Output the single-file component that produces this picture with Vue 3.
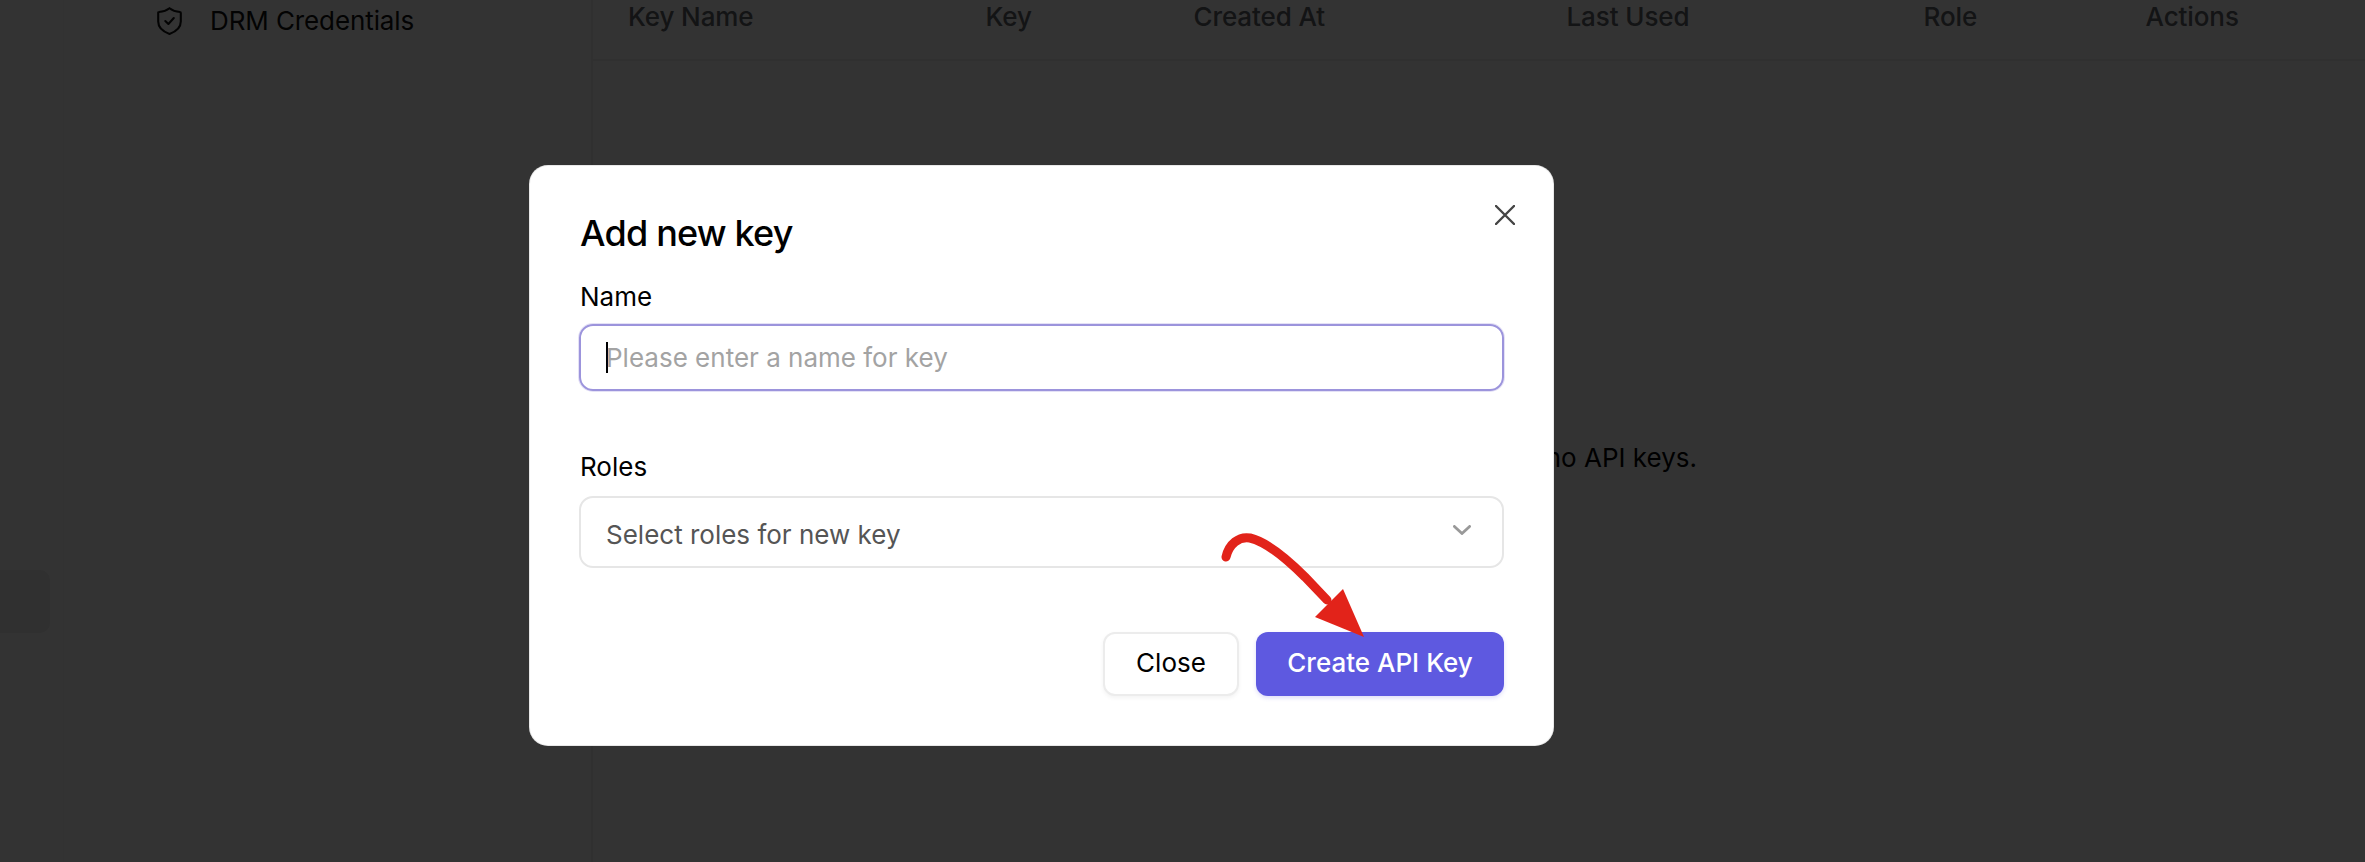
<script setup>
const columns = [
  { label: 'Key Name', width: '357.5px' },
  { label: 'Key', width: '208px' },
  { label: 'Created At', width: '373px' },
  { label: 'Last Used', width: '357px' },
  { label: 'Role', width: '222px' },
  { label: 'Actions', width: '1fr' },
]
const gridTemplate = columns.map((c) => c.width).join(' ')
</script>

<template>
  <div class="page">
    <aside class="sidebar">
      <div class="rail"><div class="rail-item"></div></div>
      <nav class="nav">
        <div class="nav-item">
          <svg class="shield" viewBox="0 0 25 28" fill="none" stroke="currentColor" stroke-width="2.1" stroke-linejoin="round" stroke-linecap="round">
            <path d="M12.5 1.2 C15 3.2 19 4.6 23 5 C23.6 5 23.8 5.3 23.8 5.9 V14.5 C23.8 20.5 18.5 24.8 12.5 26.9 C6.5 24.8 1.2 20.5 1.2 14.5 V5.9 C1.2 5.3 1.4 5 2 5 C6 4.6 10 3.2 12.5 1.2 Z" />
            <path d="M8.3 14 L11.4 17 L16.8 11" />
          </svg>
          <span>DRM Credentials</span>
        </div>
      </nav>
    </aside>
    <main class="main">
      <div class="thead" :style="{ gridTemplateColumns: gridTemplate }">
        <div v-for="c in columns" :key="c.label" class="th">{{ c.label }}</div>
      </div>
      <div class="empty">You have no API keys.</div>
    </main>

    <div class="overlay">
      <section class="modal">
        <button class="close-x" aria-label="Close">
          <svg viewBox="0 0 20 20" width="20" height="20" fill="none" stroke="currentColor" stroke-width="2.4" stroke-linecap="round">
            <path d="M1 1 L19 19 M19 1 L1 19" />
          </svg>
        </button>
        <h2 class="title">Add new key</h2>
        <label class="label label-name">Name</label>
        <div class="field field-focus">
          <span class="caret"></span>
          <span class="placeholder">Please enter a name for key</span>
        </div>
        <label class="label label-roles">Roles</label>
        <div class="field field-select">
          <span class="select-text">Select roles for new key</span>
          <svg class="chevron" viewBox="0 0 18 10" width="18" height="10" fill="none" stroke="currentColor" stroke-width="2.8" stroke-linecap="round" stroke-linejoin="round">
            <path d="M1.4 1.4 L9 8.6 L16.6 1.4" />
          </svg>
        </div>
        <div class="actions">
          <button class="btn btn-close">Close</button>
          <button class="btn btn-create">Create API Key</button>
        </div>
        <svg class="arrow" viewBox="0 0 160 115" width="160" height="115">
          <path d="M11 27 C14 14 24 6 35 8 C52 12 74 31 90 47 L112 70" fill="none" stroke="#e2231a" stroke-width="9" stroke-linecap="round" />
          <path d="M128 59 L149 107 L100 87 Z" fill="#e2231a" />
        </svg>
      </section>
    </div>
  </div>
</template>

<style>
html, body { margin: 0; padding: 0; background: #fff; overflow: hidden; }
</style>

<style scoped>
.page {
  position: relative;
  display: flex;
  width: 2365px;
  height: 862px;
  overflow: hidden;
  background: #fff;
  font-family: Inter, "Liberation Sans", sans-serif;
  color: #000;
}
.sidebar {
  width: 593px;
  flex: none;
  display: flex;
  box-sizing: border-box;
  border-right: 2px solid #f0f0f0;
}
.rail {
  width: 64px;
  flex: none;
  box-sizing: border-box;
  padding-top: 570px;
  border-right: 1px solid #fafafa;
}
.rail-item {
  width: 50px;
  height: 63px;
  background: #eeeeee;
  border-radius: 0 10px 10px 0;
}
.nav { flex: 1; padding-left: 93px; }
.nav-item {
  display: flex;
  align-items: center;
  gap: 28px;
  height: 40px;
  font-size: 26px;
  letter-spacing: -0.1px;
  color: #111;
}
.shield { width: 25px; height: 28px; margin-top: 2px; flex: none; }
.main { flex: 1; display: flex; flex-direction: column; min-width: 0; }
.thead {
  display: grid;
  padding-left: 35px;
  height: 59px;
  border-bottom: 2px solid #f0f0f0;
  box-sizing: content-box;
}
.th { font-size: 26px; font-weight: 500; line-height: 34px; color: #5f6368; letter-spacing: -0.1px; }
.empty {
  display: flex;
  justify-content: flex-end;
  padding: 380px 668px 0 0;
  font-size: 26px;
  line-height: 34px;
  color: #000;
}
.overlay {
  position: absolute;
  inset: 0;
  box-sizing: border-box;
  padding: 166px 0 0 530px;
  background: rgba(0, 0, 0, 0.8);
}
.modal {
  position: relative;
  width: 1023px;
  height: 579px;
  box-sizing: border-box;
  padding: 0 49px 0 49px;
  background: #fff;
  border-radius: 18px;
  box-shadow: 0 0 0 1px #e8e8e8;
  display: flex;
  flex-direction: column;
}
.close-x {
  position: absolute;
  top: 39px;
  right: 38px;
  padding: 0;
  border: 0;
  background: none;
  color: #444;
  display: flex;
}
.title {
  margin: 45px 0 0 1px;
  font-size: 36px;
  line-height: 44px;
  font-weight: 550;
  letter-spacing: -0.8px;
  color: #000;
}
.label { font-size: 26px; line-height: 34px; font-weight: 430; margin-left: 1px; }
.label-name { margin-top: 25px; }
.label-roles { margin-top: 59px; }
.field {
  box-sizing: border-box;
  display: flex;
  align-items: center;
  font-size: 26px;
}
.field-focus {
  margin-top: 10px;
  height: 67px;
  padding-left: 25px;
  border: 2px solid #9c94dc;
  border-radius: 14px;
  box-shadow: 0 0 0 1px #e4e1f6;
}
.caret { width: 2px; height: 31px; margin-right: -2px; background: #000; }
.placeholder { color: #a3a3a3; }
.field-select {
  margin-top: 12px;
  height: 72px;
  padding: 4px 19px 0 25px;
  justify-content: space-between;
  border: 2px solid #e6e6e6;
  border-radius: 14px;
  color: #555;
}
.chevron { color: #999; margin-top: -8px; margin-right: 12px; }
.actions {
  display: flex;
  justify-content: flex-end;
  gap: 17px;
  margin-top: 64px;
}
.btn {
  font-family: inherit;
  font-size: 26px;
  line-height: 34px;
  box-sizing: border-box;
  height: 64px;
  padding: 0 0 2px;
  cursor: pointer;
}
.btn-close {
  width: 136px;
  background: #fff;
  color: #000;
  font-weight: 430;
  border: 2px solid #ececec;
  border-radius: 12px;
  box-shadow: 0 2px 4px rgba(0, 0, 0, 0.05);
}
.btn-create {
  width: 248px;
  background: #5e59e0;
  color: #fff;
  font-weight: 450;
  border: 0;
  border-radius: 12px;
  box-shadow: 0 2px 4px rgba(94, 89, 224, 0.2);
}
.arrow { position: absolute; left: 685px; top: 364px; pointer-events: none; }
</style>
